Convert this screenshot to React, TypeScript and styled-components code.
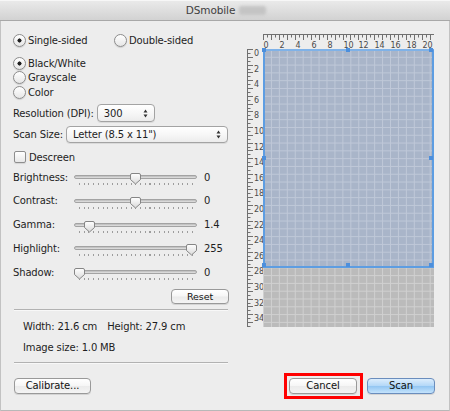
import styled, { createGlobalStyle } from "styled-components";

const FONT = `"DejaVu Sans", "Liberation Sans", Arial, sans-serif`;

const GlobalStyle = createGlobalStyle`
	html, body { margin: 0; padding: 0; background: #ededed; }
	body { font-family: ${FONT}; font-size: 10px; color: #1e1e1e; letter-spacing: -0.15px; }
	#root { width: 450px; height: 411px; }
`;

const sliders = [
	{ label: "Brightness:", value: "0", pos: 0.5 },
	{ label: "Contrast:", value: "0", pos: 0.5 },
	{ label: "Gamma:", value: "1.4", pos: 0.085 },
	{ label: "Highlight:", value: "255", pos: 1 },
	{ label: "Shadow:", value: "0", pos: 0 },
];

const CM_X = 7.95;
const CM_Y = 7.8;

function TopRuler() {
	const ticks = [];
	for (let i = 0; i <= 43; i++) {
		const x = Math.round((i * CM_X) / 2) + 0.5;
		ticks.push(<line key={i} x1={x} x2={x} y1={5} y2={i % 2 === 0 ? 11 : 8.5} />);
	}
	const labels = [];
	for (let n = 0; n <= 20; n += 2) {
		labels.push(
			<text key={n} x={Math.round(n * CM_X) + 0.5} y={18.5}>
				{n}
			</text>
		);
	}
	return (
		<svg width="171" height="20" viewBox="0 0 171 20">
			<g stroke="#707070" strokeWidth="1">
				<line x1="0" x2="171" y1="5.5" y2="5.5" />
				{ticks}
			</g>
			<g fill="#4a4a4a" fontSize="8" fontFamily="DejaVu Sans" letterSpacing="0">
				{labels}
			</g>
		</svg>
	);
}

function SideRuler() {
	const ticks = [];
	for (let i = 0; i <= 71; i++) {
		const y = Math.round((i * CM_Y) / 2) + 0.5;
		ticks.push(<line key={i} x1={0} x2={i % 2 === 0 ? 6 : 3.5} y1={y} y2={y} />);
	}
	const labels = [];
	for (let n = 0; n <= 34; n += 2) {
		labels.push(
			<text key={n} x={7} y={Math.round(n * CM_Y) + 7}>
				{n}
			</text>
		);
	}
	return (
		<svg width="16" height="278" viewBox="0 0 16 278">
			<g stroke="#707070" strokeWidth="1">
				<line x1="0.5" x2="0.5" y1="0" y2="278" />
				{ticks}
			</g>
			<g fill="#4a4a4a" fontSize="8" fontFamily="DejaVu Sans" letterSpacing="0">
				{labels}
			</g>
		</svg>
	);
}

function StepperArrows() {
	return (
		<svg width="5" height="9" viewBox="0 0 5 9">
			<path d="M0.5 3.5 L2.5 0.5 L4.5 3.5 Z M0.5 5.5 L2.5 8.5 L4.5 5.5 Z" fill="#333" />
		</svg>
	);
}

function SliderKnob() {
	return (
		<svg width="11" height="12" viewBox="0 0 11 12">
			<defs>
				<linearGradient id="knob" x1="0" y1="0" x2="0" y2="1">
					<stop offset="0" stopColor="#ffffff" />
					<stop offset="1" stopColor="#d9d9d9" />
				</linearGradient>
			</defs>
			<path
				d="M2 0.5 H9 A1.5 1.5 0 0 1 10.5 2 V6.5 L5.5 11 L0.5 6.5 V2 A1.5 1.5 0 0 1 2 0.5 Z"
				fill="url(#knob)"
				stroke="#858585"
			/>
		</svg>
	);
}

export default function App() {
	return (
		<>
			<GlobalStyle />
			<Window>
				<TitleBar>
					<TitleText>DSmobile</TitleText>
					<Redacted />
				</TitleBar>

				<Content>
					<LeftColumn>
						<SidedRow>
							<Choice>
								<Radio $checked />
								Single-sided
							</Choice>
							<Choice>
								<Radio />
								Double-sided
							</Choice>
						</SidedRow>

						<ColorGroup>
							<Choice>
								<Radio $checked />
								Black/White
							</Choice>
							<Choice>
								<Radio />
								Grayscale
							</Choice>
							<Choice>
								<Radio />
								Color
							</Choice>
						</ColorGroup>

						<FieldRow $top={4.5} $height={18}>
							<span>Resolution (DPI):</span>
							<Popup $width={58}>
								300
								<StepperArrows />
							</Popup>
						</FieldRow>

						<FieldRow $top={4} $height={17}>
							<span>Scan Size:</span>
							<Popup $grow>
								Letter (8.5 x 11")
								<StepperArrows />
							</Popup>
						</FieldRow>

						<CheckRow>
							<CheckBox />
							Descreen
						</CheckRow>

						<SliderList>
							{sliders.map((s) => (
								<SliderRow key={s.label}>
									<span>{s.label}</span>
									<SliderTrack>
										<Rail />
										<Ticks />
										<Knob $pos={s.pos}>
											<SliderKnob />
										</Knob>
									</SliderTrack>
									<SliderValue>{s.value}</SliderValue>
								</SliderRow>
							))}
						</SliderList>

						<ResetRow>
							<PushButton $width={58} $small>
								Reset
							</PushButton>
						</ResetRow>

						<Separator $top={5} />

						<Info>
							<InfoLine $top={9}>
								<span>Width: 21.6 cm</span>
								<span>Height: 27.9 cm</span>
							</InfoLine>
							<InfoLine $top={7}>
								<span>Image size: 1.0 MB</span>
							</InfoLine>
						</Info>

						<Separator $top={8} />
					</LeftColumn>

					<Preview>
						<Corner />
						<TopRuler />
						<SideRuler />
						<Canvas>
							<Selection>
								<Handle $x="0%" $y="0%" />
								<Handle $x="50%" $y="0%" />
								<Handle $x="100%" $y="0%" />
								<Handle $x="0%" $y="50%" />
								<Handle $x="100%" $y="50%" />
								<Handle $x="0%" $y="100%" />
								<Handle $x="50%" $y="100%" />
								<Handle $x="100%" $y="100%" />
							</Selection>
						</Canvas>
					</Preview>
				</Content>

				<Footer>
					<PushButton $width={77}>Calibrate...</PushButton>
					<Actions>
						<Highlight>
							<PushButton $width={68}>Cancel</PushButton>
						</Highlight>
						<PushButton $width={68} $primary>
							Scan
						</PushButton>
					</Actions>
				</Footer>
			</Window>
		</>
	);
}

const Window = styled.div`
	width: 450px;
	height: 411px;
	box-sizing: border-box;
	display: flex;
	flex-direction: column;
	background: #ededed;
	box-shadow: inset 1px 0 0 #c2c2c2, inset -1px 0 0 #c2c2c2, inset 0 -1px 0 #b8b8b8;
`;

const TitleBar = styled.div`
	height: 20px;
	flex-shrink: 0;
	display: flex;
	align-items: center;
	justify-content: center;
	gap: 4px;
	padding-left: 2px;
	background: linear-gradient(#ebebeb, #dcdcdc 60%, #d2d2d2);
	border-bottom: 1px solid #a8a8a8;
	box-shadow: inset 0 1px 0 #f7f7f7;
`;

const TitleText = styled.span`
	font-size: 10.5px;
	color: #404040;
	letter-spacing: -0.1px;
`;

const Redacted = styled.span`
	width: 27px;
	height: 9px;
	background: #c4c4c4;
	border-radius: 3px;
	filter: blur(1.5px);
`;

const Content = styled.div`
	display: flex;
	gap: 18px;
	padding-left: 13px;
`;

const LeftColumn = styled.div`
	width: 216px;
	display: flex;
	flex-direction: column;
`;

const SidedRow = styled.div`
	margin-top: 11px;
	height: 16px;
	display: grid;
	grid-template-columns: 101px auto;
	align-items: center;
`;

const ColorGroup = styled.div`
	margin-top: 8px;
	display: grid;
	grid-auto-rows: 14.5px;
	align-items: center;
`;

const Choice = styled.label`
	display: flex;
	align-items: center;
	gap: 2px;
	white-space: nowrap;
`;

const Radio = styled.span<{ $checked?: boolean }>`
	width: 13px;
	height: 13px;
	box-sizing: border-box;
	border-radius: 50%;
	border: 1px solid #8c8c8c;
	background: radial-gradient(circle, #202020 0 1.8px, transparent 2.3px),
		linear-gradient(#ffffff, #e6e6e6);
	background-size: ${(p) => (p.$checked ? "auto, auto" : "0 0, auto")};
	background-repeat: no-repeat;
	box-shadow: 0 1px 1px rgba(0, 0, 0, 0.12);
`;

const FieldRow = styled.div<{ $top: number; $height: number }>`
	margin-top: ${(p) => p.$top}px;
	height: ${(p) => p.$height}px;
	display: flex;
	align-items: center;
	gap: 3px;
	white-space: nowrap;
`;

const Popup = styled.div<{ $width?: number; $grow?: boolean }>`
	${(p) => (p.$width ? `width: ${p.$width}px;` : "")}
	${(p) => (p.$grow ? "flex: 1; margin-right: 1px;" : "")}
	height: 100%;
	box-sizing: border-box;
	display: flex;
	align-items: center;
	justify-content: space-between;
	padding: 0 6px 0 6px;
	border: 1px solid #a3a3a3;
	border-radius: 4px;
	background: linear-gradient(#ffffff, #f6f6f6 55%, #ececec);
	box-shadow: 0 1px 0 rgba(0, 0, 0, 0.08);
`;

const CheckRow = styled.label`
	margin-top: 7px;
	height: 14px;
	display: flex;
	align-items: center;
	gap: 3px;
	padding-left: 1px;
`;

const CheckBox = styled.span`
	width: 12px;
	height: 12px;
	box-sizing: border-box;
	border: 1px solid #8e8e8e;
	border-radius: 2px;
	background: linear-gradient(#ffffff, #e8e8e8);
	box-shadow: 0 1px 1px rgba(0, 0, 0, 0.1);
`;

const SliderList = styled.div`
	margin-top: 1.25px;
	display: grid;
	grid-auto-rows: 23.75px;
`;

const SliderRow = styled.div`
	display: grid;
	grid-template-columns: 61px 123px auto;
	align-items: center;
`;

const SliderTrack = styled.div`
	position: relative;
	height: 100%;
`;

const Rail = styled.div`
	position: absolute;
	left: 0;
	right: 0;
	top: calc(50% - 2px);
	height: 4px;
	box-sizing: border-box;
	border-radius: 2px;
	border: 1px solid #a3a3a3;
	background: linear-gradient(#b9b9b9, #e4e4e4);
`;

const Ticks = styled.div`
	position: absolute;
	left: 5px;
	right: 4px;
	top: calc(50% + 6px);
	height: 2px;
	background: repeating-linear-gradient(to right, #9d9d9d 0 1px, transparent 1px 4.7px);
`;

const Knob = styled.div<{ $pos: number }>`
	position: absolute;
	top: calc(50% - 4px);
	left: ${(p) => p.$pos * 112}px;
	width: 11px;
	height: 12px;
	line-height: 0;
`;

const SliderValue = styled.span`
	padding-left: 7px;
`;

const ResetRow = styled.div`
	margin-top: 5px;
	display: flex;
	justify-content: flex-end;
`;

const PushButton = styled.button<{ $width: number; $primary?: boolean; $small?: boolean }>`
	width: ${(p) => p.$width}px;
	height: ${(p) => (p.$small ? 15 : 16)}px;
	padding: 0;
	box-sizing: border-box;
	border: 1px solid ${(p) => (p.$primary ? "#6a8dbd" : "#999999")};
	border-radius: 4px;
	background: ${(p) =>
		p.$primary
			? "linear-gradient(#dcedfc, #b4d8f8 48%, #93c6f2 52%, #c4e3fc)"
			: "linear-gradient(#ffffff, #f6f6f6 48%, #ebebeb 52%, #f4f4f4)"};
	box-shadow: 0 1px 0 rgba(0, 0, 0, 0.1);
	font-family: ${FONT};
	font-size: ${(p) => (p.$small ? 9.5 : 10)}px;
	letter-spacing: -0.1px;
	color: #111;
	line-height: 1;
`;

const Separator = styled.div<{ $top: number }>`
	margin: ${(p) => p.$top}px 1px 0 1px;
	height: 1px;
	background: #b2b2b2;
	box-shadow: 0 1px 0 #f8f8f8;
`;

const Info = styled.div`
	display: flex;
	flex-direction: column;
	padding-left: 10px;
`;

const InfoLine = styled.div<{ $top: number }>`
	margin-top: ${(p) => p.$top}px;
	height: 14px;
	display: flex;
	align-items: center;
	gap: 10px;
`;

const Preview = styled.div`
	margin-top: 8px;
	display: grid;
	grid-template-columns: 16px 171px;
	grid-template-rows: 20px 278px;
	align-self: flex-start;
	& > svg {
		display: block;
	}
`;

const Corner = styled.div``;

const Canvas = styled.div`
	position: relative;
	background-color: #bbbbbb;
	background-image: linear-gradient(to right, #d0d0d0 1px, transparent 1px),
		linear-gradient(to bottom, #d0d0d0 1px, transparent 1px);
	background-size: 7.95px 7.8px;
`;

const Selection = styled.div`
	position: absolute;
	left: 0;
	top: 0;
	width: 171px;
	height: 219px;
	box-sizing: border-box;
	border: 2px solid #5d9de2;
	border-top-color: #7fb2e8;
	background-color: #a9b5c9;
	background-image: linear-gradient(to right, #bfc8d8 1px, transparent 1px),
		linear-gradient(to bottom, #bfc8d8 1px, transparent 1px);
	background-size: 7.95px 7.8px;
	background-position: -2px -2px;
`;

const Handle = styled.span<{ $x: string; $y: string }>`
	position: absolute;
	left: ${(p) => p.$x};
	top: ${(p) => p.$y};
	width: 4px;
	height: 4px;
	margin: -3px 0 0 -3px;
	background: #4d8fdc;
`;

const Footer = styled.div`
	margin-top: 10px;
	height: 26px;
	display: flex;
	align-items: center;
	justify-content: space-between;
	padding: 0 15px 0 14px;
`;

const Actions = styled.div`
	display: flex;
	align-items: center;
	gap: 4px;
`;

const Highlight = styled.div`
	display: flex;
	border: 3px solid #ff0000;
	padding: 2px 3px 2px 2px;
`;
